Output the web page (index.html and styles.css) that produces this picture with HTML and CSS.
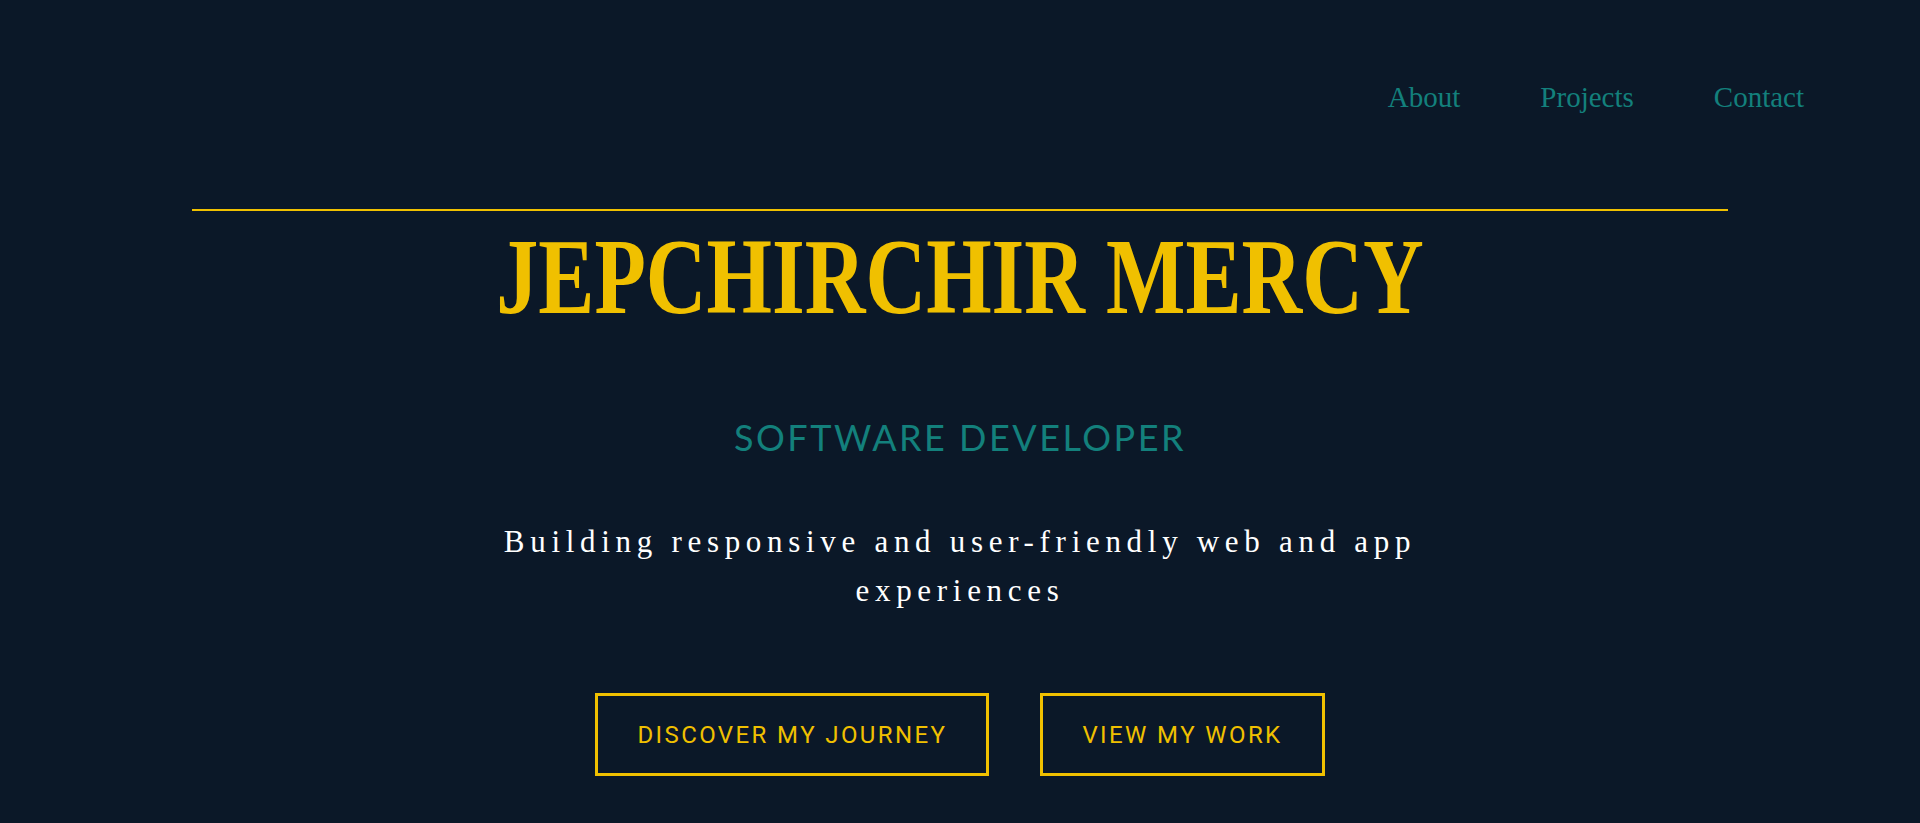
FILE: index.html
```html
<!DOCTYPE html>
<html lang="en">
<head>
<meta charset="utf-8">
<title>Jepchirchir Mercy</title>
<link rel="stylesheet" href="styles.css">
</head>
<body>
<header class="site-header">
  <nav class="nav">
    <a class="nav-link" href="#about">About</a>
    <a class="nav-link" href="#projects">Projects</a>
    <a class="nav-link" href="#contact">Contact</a>
  </nav>
</header>
<main class="hero">
  <hr class="hero-rule">
  <h1 class="hero-title">JEPCHIRCHIR MERCY</h1>
  <h2 class="hero-role">SOFTWARE DEVELOPER</h2>
  <p class="hero-tagline">Building responsive and user-friendly web and app experiences</p>
  <div class="hero-actions">
    <a class="btn btn-journey" href="#about">DISCOVER MY JOURNEY</a>
    <a class="btn btn-work" href="#projects">VIEW MY WORK</a>
  </div>
</main>
</body>
</html>
```
FILE: styles.css
```css
html, body {
  margin: 0;
  padding: 0;
}
body {
  background: #0b1828;
  color: #ffffff;
  font-family: "Liberation Serif", "DejaVu Serif", serif;
  min-height: 823px;
  overflow: hidden;
}
.site-header {
  padding: 77px 116px 0 0;
}
.nav {
  display: flex;
  justify-content: flex-end;
  gap: 80px;
}
.nav-link {
  color: #13807c;
  text-decoration: none;
  font-size: 29px;
  line-height: 40px;
}
.hero {
  display: flex;
  flex-direction: column;
  align-items: center;
  padding-top: 92px;
}
.hero-rule {
  width: 80%;
  margin: 0;
  border: 0;
  height: 2px;
  background: #f0c000;
}
.hero-title {
  margin: 11px 0 0;
  font-family: "Liberation Serif", serif;
  font-weight: bold;
  font-size: 107px;
  line-height: 110px;
  color: #f0c000;
  white-space: nowrap;
  transform: scaleX(0.786);
}
.hero-role {
  margin: 83px 0 0;
  font-family: "Lato", "Open Sans", sans-serif;
  font-weight: 400;
  font-size: 36px;
  line-height: 44px;
  letter-spacing: 2.5px;
  color: #13807c;
}
.hero-tagline {
  margin: 58px 0 0;
  max-width: 980px;
  text-align: center;
  font-size: 31px;
  line-height: 49px;
  letter-spacing: 5.7px;
  color: #ffffff;
}
.hero-actions {
  display: flex;
  gap: 51px;
  margin-top: 78px;
}
.btn {
  display: flex;
  align-items: center;
  justify-content: center;
  height: 83px;
  box-sizing: border-box;
  padding: 0 39px;
  border: 3px solid #f0c000;
  color: #f0c000;
  text-decoration: none;
  font-family: "Roboto", "Liberation Sans", sans-serif;
  font-size: 24px;
  letter-spacing: 2.4px;
}
```
